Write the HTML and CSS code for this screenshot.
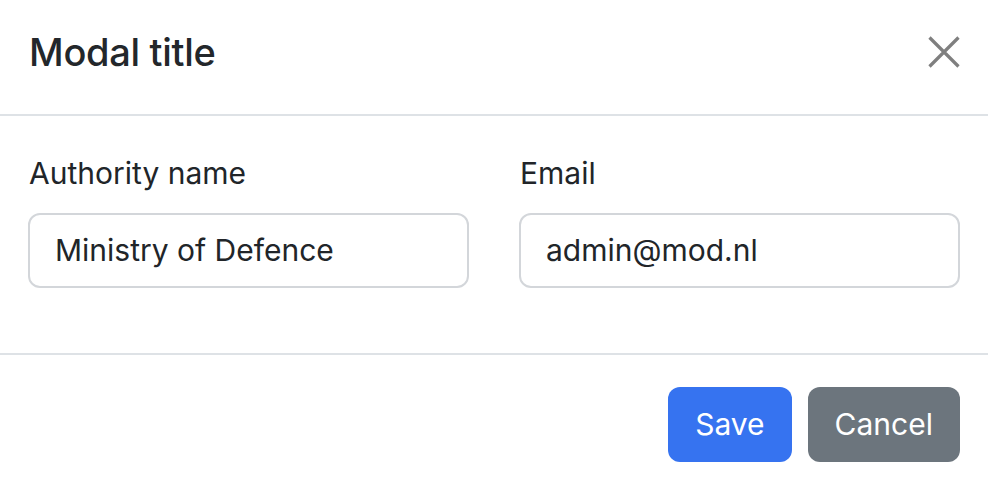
FILE: index.html
```html
<!DOCTYPE html>
<html lang="en">
<head>
<meta charset="utf-8">
<title>Modal</title>
<link rel="stylesheet" href="styles.css">
</head>
<body>
<div class="modal">
  <div class="modal-header">
    <h5 class="modal-title">Modal title</h5>
    <button class="btn-close" type="button" aria-label="Close">
      <svg viewBox="0 0 32 32" width="32" height="32"><path d="M1.5 1.5 L30.5 30.5 M30.5 1.5 L1.5 30.5" stroke="#7f7f7f" stroke-width="3.2" stroke-linecap="butt" fill="none"/></svg>
    </button>
  </div>
  <div class="modal-body">
    <div class="field">
      <label class="form-label">Authority name</label>
      <div class="form-control">Ministry of Defence</div>
    </div>
    <div class="field">
      <label class="form-label">Email</label>
      <div class="form-control">admin@mod.nl</div>
    </div>
  </div>
  <div class="modal-footer">
    <button class="btn btn-primary" type="button">Save</button>
    <button class="btn btn-secondary" type="button">Cancel</button>
  </div>
</div>
</body>
</html>
```

FILE: styles.css
```css
html, body {
  margin: 0;
  padding: 0;
  background: #fff;
}
body {
  font-family: Inter, "Noto Sans", sans-serif;
  color: #212529;
}
.modal {
  width: 988px;
  height: 482px;
  overflow: hidden;
}
.modal-header {
  display: flex;
  align-items: flex-start;
  justify-content: space-between;
  height: 116px;
  box-sizing: border-box;
  padding: 28px 28px 0 29px;
  border-bottom: 2px solid #dee2e6;
}
.modal-title {
  margin: 0;
  font-size: 38px;
  font-weight: 500;
  line-height: 48px;
  letter-spacing: -0.3px;
  color: #23272b;
}
.btn-close {
  margin: 8px 0 0 0;
  padding: 0;
  border: 0;
  background: transparent;
  width: 32px;
  height: 32px;
  display: block;
}
.btn-close svg { display: block; }
.modal-body {
  display: grid;
  grid-template-columns: 1fr 1fr;
  column-gap: 50px;
  padding: 35px 28px 65px 28px;
}
.field {
  display: flex;
  flex-direction: column;
}
.form-label {
  font-size: 30px;
  line-height: 45px;
  margin: 0 0 17px 1px;
}
.form-control {
  height: 75px;
  box-sizing: border-box;
  border: 2px solid #d3d6da;
  border-radius: 12px;
  padding: 0 25px;
  font-size: 30px;
  line-height: 71px;
}
.modal-footer {
  display: flex;
  justify-content: flex-end;
  gap: 16px;
  padding: 32px 28px 0 28px;
  border-top: 2px solid #dee2e6;
}
.btn {
  height: 75px;
  border: 0;
  border-radius: 12px;
  font-family: Inter, "Noto Sans", sans-serif;
  font-size: 30px;
  color: #fff;
  padding: 0 27px;
  line-height: 75px;
}
.btn-primary { background: #3673f0; }
.btn-secondary { background: #6c757d; }
```
